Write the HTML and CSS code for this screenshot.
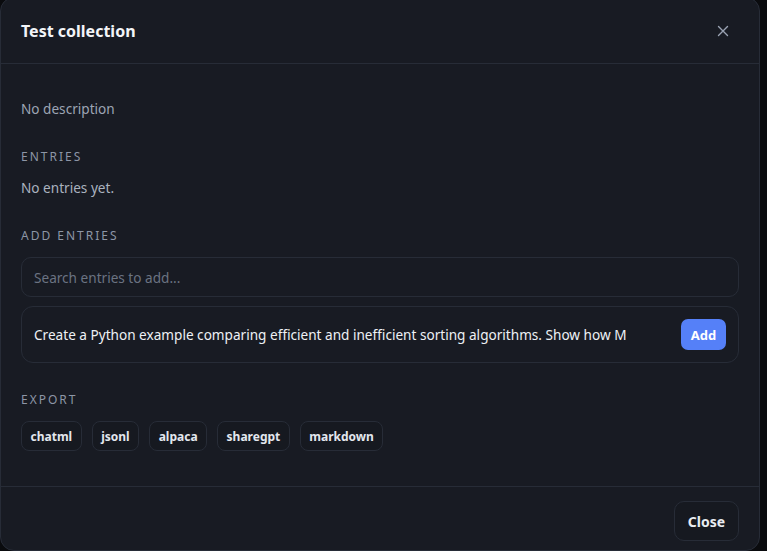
FILE: index.html
```html
<!DOCTYPE html>
<html lang="en">
<head>
<meta charset="utf-8">
<title>Test collection</title>
<link rel="stylesheet" href="styles.css">
</head>
<body>
<div class="modal">
  <header class="modal-header">
    <h2 class="title">Test collection</h2>
    <button class="icon-btn" aria-label="Close">
      <svg width="16" height="16" viewBox="0 0 16 16" fill="none" stroke="currentColor" stroke-width="1.4" stroke-linecap="round"><path d="M3.5 3.5l9 9M12.5 3.5l-9 9"/></svg>
    </button>
  </header>
  <div class="modal-body">
    <p class="desc">No description</p>

    <div class="label label-first">Entries</div>
    <p class="muted">No entries yet.</p>

    <div class="label">Add entries</div>
    <div class="search">Search entries to add...</div>
    <div class="entry">
      <span class="entry-text">Create a Python example comparing efficient and inefficient sorting algorithms. Show how M</span>
      <button class="add-btn">Add</button>
    </div>

    <div class="label label-export">Export</div>
    <div class="chips">
      <button class="chip">chatml</button>
      <button class="chip">jsonl</button>
      <button class="chip">alpaca</button>
      <button class="chip">sharegpt</button>
      <button class="chip">markdown</button>
    </div>
  </div>
  <footer class="modal-footer">
    <button class="close-btn">Close</button>
  </footer>
</div>
</body>
</html>
```
FILE: styles.css
```css
* { box-sizing: border-box; }
html, body { margin: 0; padding: 0; }
body {
  background: #0a0b0e;
  font-family: "Noto Sans", "Open Sans", sans-serif;
  color: #e6e9ef;
  width: 767px;
  height: 551px;
  overflow: hidden;
}
.modal {
  width: 760px;
  height: 554px;
  margin-top: -3px;
  background: #181b23;
  border: 1px solid #272c37;
  border-radius: 14px;
  display: flex;
  flex-direction: column;
}
.modal-header {
  height: 66px;
  flex: none;
  display: flex;
  align-items: center;
  justify-content: space-between;
  padding: 0 28px 0 20px;
  border-bottom: 1px solid #272c37;
}
.title {
  margin: 0;
  font-size: 16px;
  font-weight: 700;
  color: #f3f5f8;
}
.icon-btn {
  background: none;
  border: 0;
  padding: 0;
  color: #9aa3b3;
  display: flex;
}
.modal-body {
  flex: 1;
  padding: 35px 20px 0 20px;
}
.desc, .muted {
  margin: 0;
  font-size: 13.6px;
  line-height: 20px;
  color: #a1a9b7;
}
.desc { color: #9da5b4; }
.muted { margin-top: 13px; color: #aab2bf; }
.label {
  margin-top: 30px;
  font-size: 12px;
  line-height: 16px;
  letter-spacing: 2px;
  text-transform: uppercase;
  color: #8d96a6;
}
.label-export { margin-top: 29px; }
.search {
  margin-top: 13px;
  height: 40px;
  border: 1px solid #272c37;
  border-radius: 10px;
  padding: 0 12px;
  display: flex;
  align-items: center;
  font-size: 13.6px;
  color: #6b7382;
}
.entry {
  margin-top: 9px;
  height: 57px;
  border: 1px solid #272c37;
  border-radius: 12px;
  padding: 0 12px;
  display: flex;
  align-items: center;
  justify-content: space-between;
}
.entry-text {
  font-size: 13.6px;
  color: #eef1f5;
  white-space: nowrap;
  overflow: hidden;
}
.add-btn {
  flex: none;
  width: 45px;
  height: 31px;
  border: 0;
  border-radius: 7px;
  background: #5580f8;
  color: #ffffff;
  font-family: inherit;
  font-size: 13px;
  font-weight: 700;
  padding: 0;
}
.chips {
  margin-top: 13px;
  display: flex;
  gap: 10px;
}
.chip {
  height: 30px;
  padding: 0 8.5px;
  border: 1px solid #272c37;
  border-radius: 8px;
  background: #161920;
  color: #e3e7ee;
  font-family: inherit;
  font-size: 12px;
  font-weight: 700;
}
.modal-footer {
  height: 64px;
  flex: none;
  border-top: 1px solid #272c37;
  display: flex;
  align-items: flex-start;
  justify-content: flex-end;
  padding: 14px 20px 0 20px;
}
.close-btn {
  width: 65px;
  height: 40px;
  border: 1px solid #272c37;
  border-radius: 10px;
  background: #161920;
  color: #e9ecf1;
  font-family: inherit;
  font-size: 14px;
  font-weight: 700;
}
```
